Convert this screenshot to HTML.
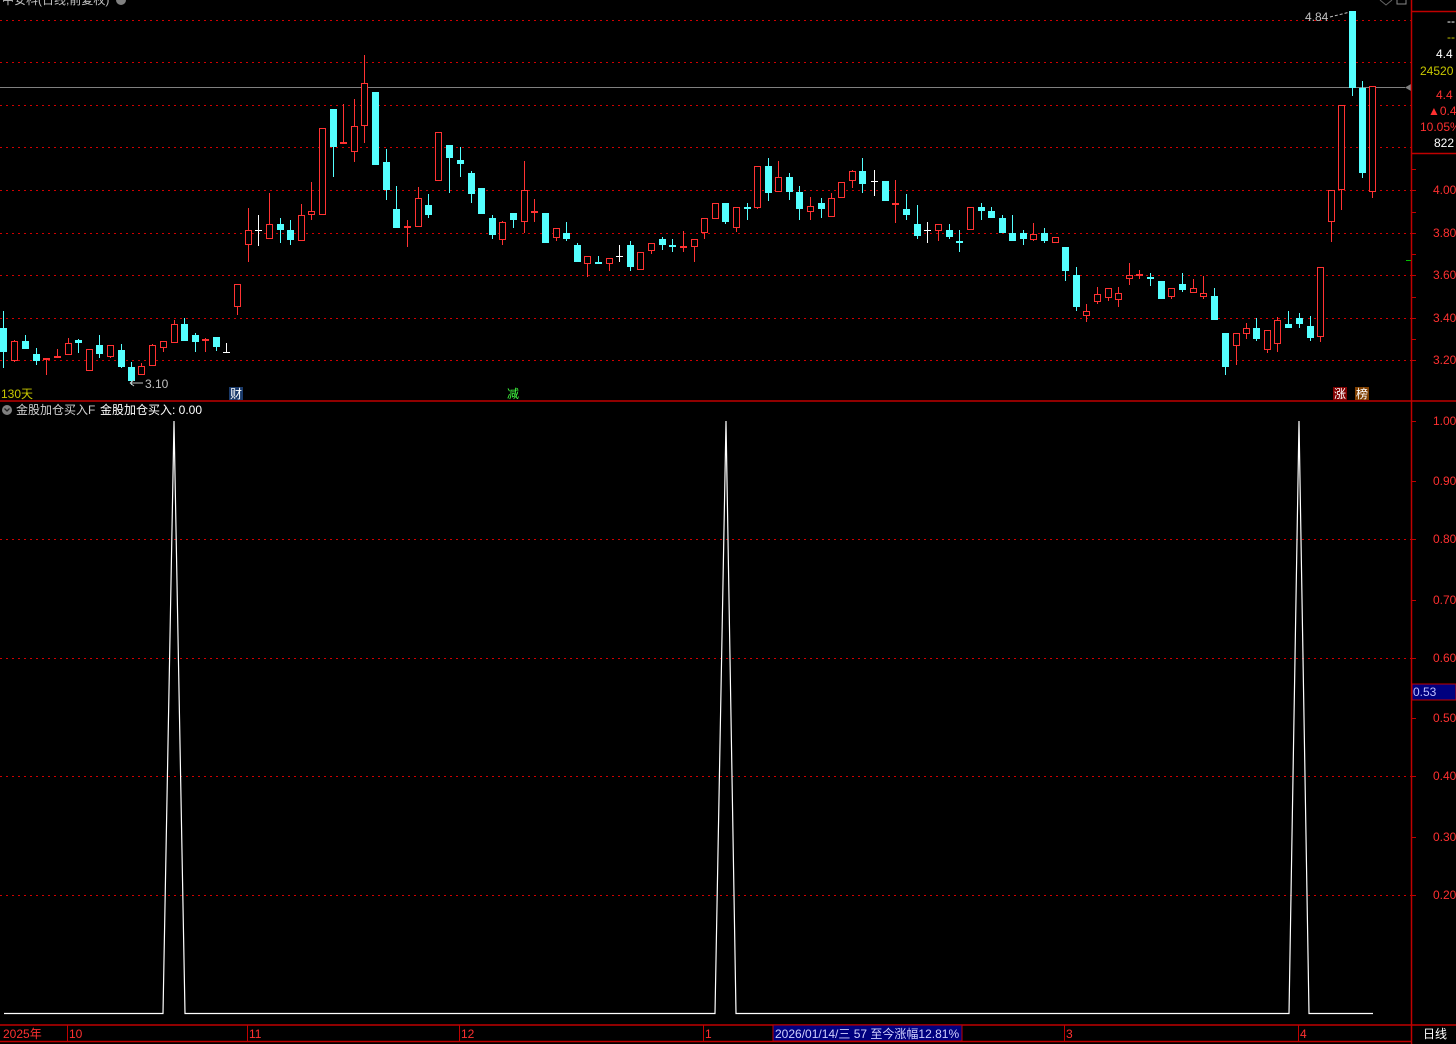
<!DOCTYPE html>
<html><head><meta charset="utf-8"><style>
html,body{margin:0;padding:0;background:#000;width:1456px;height:1044px;overflow:hidden}
svg{display:block}
text{font-family:"Liberation Sans","Noto Sans CJK SC",sans-serif;font-size:12px}
</style></head><body>
<svg id="s" width="1456" height="1044" xmlns="http://www.w3.org/2000/svg">
<rect width="1456" height="1044" fill="#000"/>
<g stroke="#d00000" stroke-dasharray="2,4" stroke-width="1">
<line x1="0" y1="20.5" x2="1411" y2="20.5"/><line x1="0" y1="62.5" x2="1411" y2="62.5"/>
<line x1="0" y1="105.5" x2="1411" y2="105.5"/><line x1="0" y1="147.5" x2="1411" y2="147.5"/>
<line x1="0" y1="190.5" x2="1411" y2="190.5"/><line x1="0" y1="233.5" x2="1411" y2="233.5"/>
<line x1="0" y1="275.5" x2="1411" y2="275.5"/><line x1="0" y1="318.5" x2="1411" y2="318.5"/>
<line x1="0" y1="360.5" x2="1411" y2="360.5"/>
<line x1="0" y1="539.5" x2="1411" y2="539.5"/><line x1="0" y1="658.5" x2="1411" y2="658.5"/>
<line x1="0" y1="776.5" x2="1411" y2="776.5"/><line x1="0" y1="895.5" x2="1411" y2="895.5"/>
</g>
<line x1="0" y1="87.5" x2="1405" y2="87.5" stroke="#808080"/>
<polygon points="1405,87.5 1411,84 1411,91" fill="#808080"/>
<g id="c"></g>
<polyline fill="none" stroke="#fff" stroke-width="1.2" points="4,1013.5 163,1013.5 174,421 185,1013.5 715,1013.5 726,421 736,1013.5 1289,1013.5 1299,421 1309,1013.5 1373,1013.5"/>
<g stroke="#c00000" stroke-width="1.5" fill="none">
<line x1="0" y1="401" x2="1456" y2="401"/>
<line x1="1411.5" y1="0" x2="1411.5" y2="1044"/>
<line x1="1411" y1="11.5" x2="1456" y2="11.5"/>
<line x1="1411" y1="153.5" x2="1456" y2="153.5"/>
<line x1="0" y1="1025" x2="1456" y2="1025"/>
<line x1="0" y1="1041.5" x2="1411" y2="1041.5"/>
</g>
<g stroke="#c00000" stroke-width="1">
<line x1="1411" y1="169.5" x2="1416" y2="169.5"/><line x1="1411" y1="190.5" x2="1416" y2="190.5"/><line x1="1411" y1="212.5" x2="1416" y2="212.5"/><line x1="1411" y1="233.5" x2="1416" y2="233.5"/><line x1="1411" y1="254.5" x2="1416" y2="254.5"/><line x1="1411" y1="275.5" x2="1416" y2="275.5"/><line x1="1411" y1="297.5" x2="1416" y2="297.5"/><line x1="1411" y1="318.5" x2="1416" y2="318.5"/><line x1="1411" y1="339.5" x2="1416" y2="339.5"/><line x1="1411" y1="360.5" x2="1416" y2="360.5"/>
<line x1="1411" y1="421.5" x2="1416" y2="421.5"/><line x1="1411" y1="481.5" x2="1416" y2="481.5"/><line x1="1411" y1="539.5" x2="1416" y2="539.5"/><line x1="1411" y1="600.5" x2="1416" y2="600.5"/><line x1="1411" y1="658.5" x2="1416" y2="658.5"/><line x1="1411" y1="718.5" x2="1416" y2="718.5"/><line x1="1411" y1="776.5" x2="1416" y2="776.5"/><line x1="1411" y1="837.5" x2="1416" y2="837.5"/><line x1="1411" y1="895.5" x2="1416" y2="895.5"/>
<line x1="67.5" y1="1025" x2="67.5" y2="1041"/><line x1="247.5" y1="1025" x2="247.5" y2="1041"/><line x1="459.5" y1="1025" x2="459.5" y2="1041"/><line x1="703.5" y1="1025" x2="703.5" y2="1041"/><line x1="1064.5" y1="1025" x2="1064.5" y2="1041"/><line x1="1298.5" y1="1025" x2="1298.5" y2="1041"/>
</g>
<line x1="1406" y1="260.5" x2="1411" y2="260.5" stroke="#00c000"/>
<text x="2" y="4" fill="#c0c0c0" font-size="13">中安科(日线,前复权)</text>
<circle cx="121" cy="0" r="5" fill="#808080"/>
<path d="M1380 0 L1386 5 L1392 0" stroke="#666" fill="none"/>
<rect x="1397" y="-2" width="9" height="6" fill="none" stroke="#888"/>
<text x="1305" y="21" fill="#c0c0c0" font-size="11">4.84</text>
<path d="M1330 17 L1350 12" stroke="#c0c0c0" stroke-dasharray="3,2"/>
<text x="145" y="388" fill="#c0c0c0">3.10</text>
<path d="M130 383 L143 383 M130 383 L134 380 M130 383 L134 386" stroke="#c0c0c0"/>
<text x="1" y="398" fill="#c8c800">130天</text>
<rect x="229" y="387" width="14" height="13" fill="#1a3a6a"/><text x="230" y="398" fill="#fff">财</text>
<text x="507" y="398" fill="#40ff40">减</text>
<rect x="1333" y="387" width="14" height="13" fill="#800000"/><text x="1334" y="398" fill="#fff">涨</text>
<rect x="1355" y="387" width="14" height="13" fill="#804000"/><text x="1356" y="398" fill="#fff">榜</text>
<circle cx="7" cy="410" r="5" fill="#808080"/>
<path d="M4.5 408.5 L7 411 L9.5 408.5" stroke="#222" fill="none" stroke-width="1.3"/>
<text x="16" y="414" fill="#d0d0d0">金股加仓买入F</text>
<text x="100" y="414" fill="#fff">金股加仓买入: 0.00</text>
<text x="1447" y="25" fill="#fff">--</text>
<text x="1447" y="41" fill="#c8c800">--</text>
<text x="1436" y="58" fill="#fff">4.4</text>
<text x="1420" y="75" fill="#c8c800">24520</text>
<text x="1436" y="99" fill="#ff3030">4.4</text>
<text x="1428" y="115" fill="#ff3030">▲0.4</text>
<text x="1420" y="131" fill="#ff3030">10.05%</text>
<text x="1434" y="147" fill="#fff">822</text>
<g fill="#ff3030">
<text x="1433" y="194">4.00</text><text x="1433" y="237">3.80</text><text x="1433" y="279">3.60</text><text x="1433" y="322">3.40</text><text x="1433" y="364">3.20</text>
<text x="1433" y="425">1.00</text><text x="1433" y="485">0.90</text><text x="1433" y="543">0.80</text><text x="1433" y="604">0.70</text><text x="1433" y="662">0.60</text><text x="1433" y="722">0.50</text><text x="1433" y="780">0.40</text><text x="1433" y="841">0.30</text><text x="1433" y="899">0.20</text>
</g>
<rect x="1412" y="684" width="44" height="16" fill="#00007f" stroke="#c00000"/>
<text x="1413" y="696" fill="#c0c0ff">0.53</text>
<text x="3" y="1038" fill="#ff3030">2025年</text>
<text x="69" y="1038" fill="#ff3030">10</text>
<text x="249" y="1038" fill="#ff3030">11</text>
<text x="461" y="1038" fill="#ff3030">12</text>
<text x="705" y="1038" fill="#ff3030">1</text>
<rect x="773" y="1025" width="189" height="16" fill="#00007f" stroke="#c00000"/>
<text x="775" y="1038" fill="#d0d0ff">2026/01/14/三 57 至今涨幅12.81%</text>
<text x="1066" y="1038" fill="#ff3030">3</text>
<text x="1300" y="1038" fill="#ff3030">4</text>
<text x="1423" y="1038" fill="#fff">日线</text>
</svg>
<script>
var D=[[3,'d',311,328,352,368],[14,'u',340,341,361,362],[25,'d',335,341,349,349],[36,'d',348,354,361,365],[46,'u',358,358,360,375],[57,'u',349,356,358,358],[68,'u',338,343,355,355],[78,'d',339,340,343,353],[89,'u',349,349,371,371],[99,'d',335,345,354,358],[110,'u',345,345,357,358],[121,'d',344,350,367,368],[131,'d',362,367,381,385],[141,'u',363,366,375,375],[152,'u',344,345,366,366],[163,'u',341,341,348,352],[174,'u',320,324,343,343],[184,'d',318,324,341,341],[195,'d',333,335,342,352],[205,'u',338,339,341,352],[216,'d',337,337,347,351],[226,'c',343,352,352,352],[237,'u',284,284,307,315],[248,'u',208,230,245,262],[258,'c',215,230,230,246],[269,'u',193,224,239,239],[280,'d',218,224,230,243],[290,'d',220,230,240,245],[301,'u',204,215,241,241],[311,'u',182,211,215,220],[322,'u',128,128,215,215],[333,'d',109,109,147,177],[343,'u',104,142,144,144],[354,'u',99,126,152,162],[364,'u',55,83,126,143],[375,'d',92,92,165,165],[386,'d',149,162,190,200],[396,'d',186,209,228,228],[407,'u',220,226,228,247],[418,'u',187,198,227,227],[428,'d',194,205,215,218],[438,'u',132,132,181,181],[449,'d',145,145,158,193],[460,'d',147,160,164,177],[471,'d',171,173,194,203],[481,'d',188,188,214,214],[492,'d',215,218,235,239],[502,'u',221,222,240,245],[513,'d',213,213,220,228],[524,'u',161,190,222,233],[534,'u',199,211,213,222],[545,'d',213,213,243,243],[556,'u',228,228,238,241],[566,'d',222,233,239,241],[577,'d',243,245,262,262],[587,'u',256,256,264,277],[598,'d',256,262,264,264],[609,'u',258,258,264,271],[619,'c',245,256,256,262],[630,'d',241,245,267,271],[640,'u',252,252,270,270],[651,'u',243,243,251,254],[662,'d',237,239,245,250],[672,'d',239,245,247,252],[683,'u',231,246,248,252],[694,'u',239,239,247,262],[704,'u',218,218,233,239],[715,'u',203,203,219,219],[725,'d',203,203,222,224],[736,'u',207,207,228,232],[747,'d',203,207,209,220],[757,'u',166,166,208,209],[768,'d',158,166,193,201],[778,'u',161,177,192,192],[789,'d',173,177,192,200],[799,'d',186,192,209,220],[810,'u',197,206,212,220],[821,'d',198,203,209,218],[831,'u',193,198,217,217],[841,'u',182,182,198,198],[852,'u',170,171,181,188],[862,'d',158,171,184,193],[874,'c',170,181,181,196],[885,'d',181,181,201,201],[895,'u',180,203,205,223],[906,'d',194,209,215,220],[917,'d',205,224,236,239],[927,'c',222,230,230,243],[938,'u',224,224,231,241],[949,'d',224,230,237,239],[959,'d',230,241,243,252],[970,'u',207,207,230,230],[981,'d',203,207,211,220],[991,'d',207,211,218,218],[1002,'d',215,218,233,233],[1012,'d',215,233,241,241],[1023,'d',230,233,239,245],[1033,'u',223,234,240,241],[1044,'d',228,233,241,243],[1055,'u',237,237,243,243],[1065,'d',247,247,271,281],[1076,'d',267,275,307,311],[1086,'u',304,311,316,322],[1097,'u',287,294,302,304],[1108,'u',288,288,298,301],[1118,'u',287,293,300,307],[1129,'u',263,275,279,285],[1139,'u',270,274,276,279],[1150,'d',273,277,279,286],[1161,'d',281,281,299,299],[1171,'u',288,288,297,299],[1182,'d',273,284,290,292],[1193,'u',279,288,293,293],[1203,'u',276,293,297,299],[1214,'d',288,296,320,320],[1225,'d',333,333,367,375],[1236,'u',333,333,346,365],[1246,'u',323,328,334,339],[1256,'d',318,328,339,341],[1267,'u',330,330,350,353],[1277,'u',317,320,344,352],[1288,'d',311,324,328,328],[1299,'d',313,318,324,328],[1310,'d',316,326,338,341],[1320,'u',267,267,337,342],[1331,'u',190,190,222,242],[1341,'u',105,105,190,210],[1352,'d',11,11,88,96],[1362,'d',81,88,173,178],[1372,'u',86,86,192,198]];
var h='';
D.forEach(function(d){var x=d[0],t=d[1],hi=d[2],o=d[3],c=d[4],lo=d[5];
var col=t=='u'?'#ff3232':(t=='d'?'#54ffff':'#ffffff');
if(t=='c'){h+='<line x1="'+(x+.5)+'" y1="'+hi+'" x2="'+(x+.5)+'" y2="'+lo+'" stroke="#fff"/><line x1="'+(x-3)+'" y1="'+(o+.5)+'" x2="'+(x+4)+'" y2="'+(o+.5)+'" stroke="#fff"/>';return;}
h+='<line x1="'+(x+.5)+'" y1="'+hi+'" x2="'+(x+.5)+'" y2="'+lo+'" stroke="'+col+'"/>';
var hh=Math.max(c-o,1.5);
if(t=='u')h+='<rect x="'+(x-2.5)+'" y="'+(o+.5)+'" width="6" height="'+(hh-1)+'" fill="#000" stroke="'+col+'"/>';
else h+='<rect x="'+(x-3)+'" y="'+o+'" width="7" height="'+hh+'" fill="'+col+'"/>';});
document.getElementById('c').innerHTML=h;
</script>
</body></html>
